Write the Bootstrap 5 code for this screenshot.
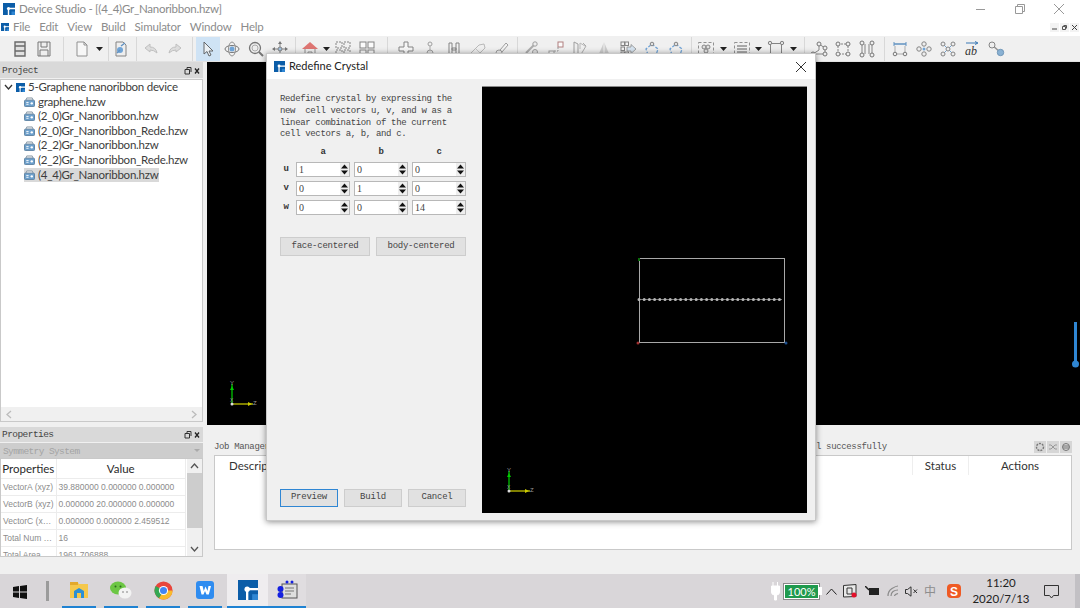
<!DOCTYPE html>
<html lang="en">
<head>
  <meta charset="UTF-8" />
  <title>Device Studio - [(4_4)Gr_Nanoribbon.hzw]</title>
  <link href="https://cdn.jsdelivr.net/npm/bootstrap@5.3.3/dist/css/bootstrap.min.css" rel="stylesheet" />
  <style>
    html, body { width: 1080px; height: 608px; overflow: hidden; }
    body { background: #f0f0f0; font-family: Lato, "Noto Sans", sans-serif; font-size: 12px; color: #333; position: relative; }

    .win-title { height: 18px; background: #fff; padding-left: 3px; color: #8a8a8a; font-size: 11.5px; letter-spacing: -.25px; line-height: 20px; }
    .win-ctrl { gap: 29px; padding-right: 16px; }
    .menu-bar { height: 18px; background: #fff; color: #8c8c8c; font-size: 11.5px; letter-spacing: -.2px; line-height: 18px; padding-left: 1px; }
    .menu-bar span { margin-right: 9px; }
    .mdi-btns { gap: 1px; padding-right: 1px; }
    .mdi-btn { width: 9px; height: 9px; background: #f3f3f3; }

    .tool-bar { height: 26px; padding-left: 8px; background: #f0f0f0; border-bottom: 1px solid #e2e2e2; }
    .ti { width: 24px; height: 18px; flex: none; }
    .ti use { opacity: .78; }
    .ti-sel { background: #cfe3f5; box-shadow: 0 3px 0 #cfe3f5, 0 -3px 0 #cfe3f5; }
    .tc { height: 18px; flex: none; }
    .tsep { flex: none; height: 24px; position: relative; }
    .tsep::after { content: ""; position: absolute; left: 50%; top: 0; bottom: 0; border-left: 1px solid #d8d8d8; }

    .main-area { height: 508px; }
    .side-col { width: 203px; flex: none; }
    .dock-head { height: 16px; background: #d9d9d9; font: 9.5px/14px "Liberation Mono", monospace; letter-spacing: -.55px; color: #444; padding: 2px 3px 0 2px; }
    .dock-props { height: 15px; margin-top: 5px; padding-top: 1px; }
    .tree-box { height: 343px; margin-top: 1px; background: #fff; border: 1px solid #c9c9c9; }
    .tree-rows { font-size: 11.5px; letter-spacing: -.25px; line-height: 14.6px; color: #3c3c3c; }
    .tree-root { padding-left: 3px; gap: 3px; }
    .tree-item { padding-left: 23px; gap: 3px; width: fit-content; }
    .tree-on { background: #d9d9d9; margin-left: 23px; padding-left: 0; padding-right: 1px; }
    .h-scroll { height: 14px; background: #f0f0f0; }

    .sym-combo { height: 15px; margin-top: 1px; background: #cdcdcd; color: #a4a4a4; font: 9.5px/15px "Liberation Mono", monospace; letter-spacing: -.6px; padding: 1px 3px 0; }
    .prop-box { height: 99px; border: 1px solid #c9c9c9; background: #fff; overflow: hidden; }
    .prop-table { width: 185px; table-layout: fixed; border-collapse: collapse; font-family: "Liberation Sans", sans-serif; font-size: 8.5px; color: #8c8c8c; }
    .prop-table th { font: 400 11.5px/19px Lato, sans-serif; color: #2b2b2b; text-align: center; height: 19px; padding: 0; border-right: 1px solid #ececec; }
    .prop-table td { height: 17px; padding: 0 2px; border: 1px solid #ececec; border-left: 0; white-space: nowrap; overflow: hidden; }
    .v-scroll { width: 15px; flex: none; background: #f0f0f0; }
    .v-thumb { height: 55px; background: #cdcdcd; }

    .work-col { min-width: 0; padding-left: 4px; }
    .gl-view { height: 363px; background: #000; padding: 0 0 15px 17px; }
    .gl-view svg { display: block; }
    .job-head { height: 13px; margin: 16px 8px 0 7px; font: 9px/13px "Liberation Mono", monospace; color: #555; letter-spacing: -.35px; }
    .job-left { width: 602px; flex: none; }
    .job-btn { width: 12px; height: 12px; background: #d6d6d6; margin-left: 1px; }
    .job-box { height: 95px; margin: 1px 8px 0 7px; background: #fff; border: 1px solid #c9c9c9; }
    .job-cols { height: 19px; color: #333; font-size: 11.5px; line-height: 19px; }
    .job-desc { padding-left: 14px; }
    .job-status { width: 57px; border: solid #eee; border-width: 0 1px; text-align: center; }
    .job-act { width: 102px; text-align: center; }

    .crystal-dlg { position: absolute; left: 266px; top: 53px; width: 550px; height: 468px; background: #f0f0f0; border: 1px solid #c8c8c8; box-shadow: 0 1px 6px rgba(0,0,0,.45); }
    .dlg-head { height: 25px; background: #fff; padding: 0 9px 0 7px; font-size: 11px; color: #222; }
    .dlg-body { height: 441px; padding: 7px 7px 7px 0; }
    .dlg-form { width: 215px; flex: none; padding: 8px 16px 6px 13px; font: 9px/11.8px "Liberation Mono", monospace; color: #444; letter-spacing: -.35px; }
    .dlg-note { white-space: pre; margin: 0; }
    .abc-grid { display: grid; grid-template-columns: 12px 54px 54px 54px; column-gap: 4px; row-gap: 4px; margin-top: 6px; align-items: center; }
    .abc-grid b { text-align: center; color: #333; line-height: 11px; }
    .spin-wrap { height: 15px; background: #fff; border: 1px solid #b8b8b8; }
    .spin-val { width: 100%; min-width: 0; height: 13px; padding: 0 0 0 2px; border: 0; border-radius: 0; background: #fff; font: 10px/13px "Liberation Serif", serif; color: #444; outline: 0; box-shadow: none; }
    .spin-arrows { width: 9px; flex: none; }
    .spin-arrows svg { display: block; }
    .dlg-btn { height: 18px; padding: 0; background: #e1e1e1; border: 1px solid #cdcdcd; border-radius: 0; font: inherit; color: #444; letter-spacing: -.25px; flex: 1 1 0; }
    .dlg-btn:hover { background: #e1e1e1; border-color: #cdcdcd; color: #444; }
    .dlg-btn-on, .dlg-btn-on:hover { border-color: #2f86d3; }
    .dlg-mid { margin-top: 22px; gap: 6px; }
    .dlg-mid .dlg-btn { height: 19px; }
    .dlg-foot { gap: 6px; }
    .dlg-view { width: 325px; height: 427px; background: #000; border-top: 1px solid #888; flex: none; }
    .dlg-view svg { display: block; }

    .level-knob { position: absolute; left: 1072px; top: 322px; width: 7px; height: 47px; }

    .task-bar { position: absolute; left: 0; right: 0; top: 574px; height: 34px; background: #d9d6d9; border-right: 5px solid #c2c0c4; }
    .start-btn { width: 46px; padding-left: 13px; }
    .task-sep { width: 3px; height: 20px; background: #9b9b9b; margin-right: 13px; }
    .task-app { height: 34px; width: 34px; margin-right: 8px; border-bottom: 2px solid #1f82d2; }
    .task-active { width: 41px; margin-left: -3px; margin-right: 0; background: #efedef; }
    .task-open { width: 38px; margin-right: 0; background: #e0dde0; }
    .tray { padding-right: 16px; color: #222; }
    .tray-cn { font-family: "Noto Sans CJK SC", sans-serif; color: #8d8d8d; margin-right: 11px; }
    .tray-caret { margin-right: 6px; }
    .clock-box { width: 62px; margin-left: 9px; margin-right: 12px; font-size: 11.5px; line-height: 16px; text-align: center; color: #222; }
    .batt-txt { width: 35px; height: 15px; background: #1f9a4d; border: 1px solid #fff; outline: 1px solid #8a8a8a; color: #fff; font-size: 11px; line-height: 13px; text-align: center; }
  </style>
</head>
<body>
  <svg width="0" height="0" class="position-absolute">
    <defs>
      <symbol id="logo" viewBox="0 0 12 12"><rect width="12" height="12" fill="#0b5da8"/><path d="M5.5 12V5.5H12" fill="none" stroke="#fff" stroke-width="1.4"/><circle cx="5.5" cy="5.5" r="1.6" fill="#fff"/><path d="M8.5 8.5H12V12H8.5Z" fill="#2f86d3"/></symbol>
      <symbol id="hzw" viewBox="0 0 12 11"><path d="M2 3.5 3 1H9L10 3.5" fill="#e6e6e6" stroke="#8a9aa8"/><rect x=".5" y="3.5" width="11" height="7" rx="1" fill="#6da0cc" stroke="#5a7f9f"/><path d="M2.5 6H5M2.5 8H5" stroke="#fff"/><circle cx="8.5" cy="7" r="1.3" fill="#fff"/></symbol>
      <symbol id="t-print" viewBox="0 0 18 18"><path d="M4 2H14V16H4Z" fill="#ddd" stroke="#444" stroke-width="1.4"/><path d="M4 6H14M4 11H14" stroke="#444" stroke-width="1.6"/></symbol>
      <symbol id="t-save" viewBox="0 0 18 18"><path d="M3 2H15V16H3Z" fill="#eee" stroke="#555"/><path d="M6 2V7H12V2M5 16V10H13V16" fill="none" stroke="#555"/></symbol>
      <symbol id="t-doc" viewBox="0 0 18 18"><path d="M4 2H11L14 5V16H4Z" fill="#fafafa" stroke="#777"/><path d="M11 2V5H14" fill="none" stroke="#777"/></symbol>
      <symbol id="t-open" viewBox="0 0 18 18"><path d="M4 2H11L14 5V16H4Z" fill="#eee" stroke="#666"/><circle cx="8" cy="10" r="3" fill="#4d8fd0"/><path d="M9 6 13 3M5 13 8 10" stroke="#3a78b5" stroke-width="1.4"/></symbol>
      <symbol id="t-undo" viewBox="0 0 18 18"><path d="M3 8 8 4V7Q14 7 15 13Q12 10 8 10V12Z" fill="#d8d8d8" stroke="#b3b3b3"/></symbol>
      <symbol id="t-redo" viewBox="0 0 18 18"><path d="M15 8 10 4V7Q4 7 3 13Q6 10 10 10V12Z" fill="#d8d8d8" stroke="#b3b3b3"/></symbol>
      <symbol id="t-arrow" viewBox="0 0 18 18"><path d="M5 2V14L8 11.5 10 16 12 15 10 11H14Z" fill="#f4f4f4" stroke="#444"/></symbol>
      <symbol id="t-rot" viewBox="0 0 18 18"><ellipse cx="9" cy="9" rx="7" ry="3.5" fill="none" stroke="#555"/><ellipse cx="9" cy="9" rx="3.5" ry="7" fill="none" stroke="#777"/><circle cx="9" cy="9" r="2.5" fill="#4d8fd0"/></symbol>
      <symbol id="t-zoom" viewBox="0 0 18 18"><circle cx="8" cy="8" r="5.5" fill="#eee" stroke="#555" stroke-width="1.3"/><circle cx="8" cy="8" r="3" fill="none" stroke="#999"/><path d="M12 12 16 16" stroke="#555" stroke-width="2"/></symbol>
      <symbol id="t-move" viewBox="0 0 18 18"><path d="M9 1 11 4H7ZM9 17 7 14H11ZM1 9 4 7V11ZM17 9 14 11V7Z" fill="#555"/><path d="M9 4V14M4 9H14" stroke="#666"/><circle cx="9" cy="9" r="2" fill="#8fb7dc" stroke="#666"/></symbol>
      <symbol id="t-home" viewBox="0 0 18 18"><path d="M1 9 9 2 17 9Z" fill="#d9534f"/><path d="M4 9V16H14V9" fill="#eee" stroke="#777"/><path d="M7 16V12H11V16" fill="none" stroke="#777"/></symbol>
      <symbol id="t-grid" viewBox="0 0 18 18"><g fill="none" stroke="#666" stroke-dasharray="2 1"><rect x="2" y="2" width="6" height="6"/><rect x="10" y="2" width="6" height="6"/><rect x="2" y="10" width="6" height="6"/><rect x="10" y="10" width="6" height="6"/></g></symbol>
      <symbol id="t-grid2" viewBox="0 0 18 18"><g fill="#fff" stroke="#666"><rect x="2" y="2" width="6" height="6"/><rect x="10" y="2" width="6" height="6"/><rect x="2" y="10" width="6" height="6"/><rect x="10" y="10" width="6" height="6"/></g></symbol>
      <symbol id="t-plus" viewBox="0 0 18 18"><path d="M7 2H11V7H16V11H11V16H7V11H2V7H7Z" fill="#fafafa" stroke="#666"/></symbol>
      <symbol id="t-man" viewBox="0 0 18 18"><circle cx="9" cy="4" r="2" fill="none" stroke="#888"/><path d="M9 6V11" stroke="#999"/><path d="M3 16H15" stroke="#bbb"/><circle cx="9" cy="13" r="3" fill="#ddd" stroke="#888"/></symbol>
      <symbol id="t-h" viewBox="0 0 18 18"><path d="M4 3H7V15H4ZM11 3H14V15H11ZM7 8H11V10H7Z" fill="#f4f4f4" stroke="#666"/></symbol>
      <symbol id="t-erase" viewBox="0 0 18 18"><path d="M2 13 10 5 15 4 16 8 8 16H4Z" fill="#f0f0f0" stroke="#aaa"/><path d="M7 9 11 13" stroke="#bbb"/></symbol>
      <symbol id="t-brush" viewBox="0 0 18 18"><path d="M7 10 13 3 15 5 9 12" fill="#f4f4f4" stroke="#888"/><circle cx="6" cy="13" r="3" fill="#eee" stroke="#888"/></symbol>
      <symbol id="t-atoms" viewBox="0 0 18 18"><path d="M3 13 11 5" stroke="#999" stroke-width="2"/><circle cx="12" cy="4" r="2.2" fill="#eee" stroke="#888"/><circle cx="12" cy="12" r="2.5" fill="#ddd" stroke="#888"/><path d="M2 16H15" stroke="#aaa" stroke-width="1.5"/></symbol>
      <symbol id="t-step" viewBox="0 0 18 18"><rect x="11" y="2" width="5" height="5" fill="#fff" stroke="#a06060"/><rect x="2" y="11" width="5" height="5" fill="#fff" stroke="#888"/><path d="M7 11H11V7" fill="none" stroke="#888" stroke-dasharray="2 1"/></symbol>
      <symbol id="t-mirror" viewBox="0 0 18 18"><path d="M3 2 7 4V16H3Z" fill="#eee" stroke="#888"/><path d="M9 16 15 6 12 3" fill="none" stroke="#999"/><path d="M9 9 9 3 14 6" fill="none" stroke="#aaa"/></symbol>
      <symbol id="t-cone" viewBox="0 0 18 18"><path d="M9 2 15 16H3Z" fill="#c4c4c4"/><path d="M9 2V16" stroke="#f4f4f4"/></symbol>
      <symbol id="t-next" viewBox="0 0 18 18"><g fill="#f4f4f4" stroke="#666"><rect x="2" y="2" width="3.5" height="3.5"/><rect x="6" y="2" width="3.5" height="3.5"/><rect x="2" y="7" width="3.5" height="3.5"/><rect x="2" y="12" width="3.5" height="3.5"/><rect x="6" y="12" width="3.5" height="3.5"/></g><path d="M8 7H12V4.5L17 9 12 13.5V11H8Z" fill="#cfe0ef" stroke="#666" stroke-width=".7"/></symbol>
      <symbol id="t-ring" viewBox="0 0 18 18"><path d="M9 4 15 9 13 15H5L3 9Z" fill="none" stroke="#4d8fd0" stroke-width="1.3" stroke-dasharray="3 1.5"/><circle cx="9" cy="4" r="1.8" fill="#ddd" stroke="#666"/></symbol>
      <symbol id="t-sel1" viewBox="0 0 18 18"><rect x="1.5" y="2.5" width="15" height="13" fill="none" stroke="#777" stroke-dasharray="3 2"/><g fill="#ddd" stroke="#666"><circle cx="7" cy="7" r="2"/><circle cx="11" cy="7" r="2"/><circle cx="9" cy="11" r="2"/></g></symbol>
      <symbol id="t-sel2" viewBox="0 0 18 18"><rect x="1.5" y="2.5" width="15" height="13" fill="none" stroke="#777" stroke-dasharray="3 2"/><path d="M4 6H14M4 9H14M4 12H14" stroke="#777" stroke-width="1.6"/></symbol>
      <symbol id="t-frame" viewBox="0 0 18 18"><rect x="3.5" y="3.5" width="11" height="11" fill="#eee" stroke="#666"/><g fill="#ddd" stroke="#666"><circle cx="3" cy="3" r="1.7"/><circle cx="15" cy="3" r="1.7"/><circle cx="3" cy="15" r="1.7"/><circle cx="15" cy="15" r="1.7"/></g></symbol>
      <symbol id="t-hex" viewBox="0 0 18 18"><path d="M3 14 9 10 9 4 15 8V14H3Z" fill="none" stroke="#666"/><g fill="#eee" stroke="#555"><circle cx="9" cy="4" r="2"/><circle cx="15" cy="8" r="2"/><circle cx="3" cy="14" r="2"/><circle cx="15" cy="14" r="2"/></g></symbol>
      <symbol id="t-sq" viewBox="0 0 18 18"><rect x="4" y="4" width="10" height="10" fill="none" stroke="#666" stroke-dasharray="2 1"/><g fill="#eee" stroke="#555"><circle cx="4" cy="4" r="2"/><circle cx="14" cy="4" r="2"/><circle cx="4" cy="14" r="2"/><circle cx="14" cy="14" r="2"/></g></symbol>
      <symbol id="t-bars" viewBox="0 0 18 18"><path d="M4 4V14M14 4V14M7 4V14M11 4V14" stroke="#666"/><g fill="#eee" stroke="#555"><circle cx="4" cy="3" r="2"/><circle cx="14" cy="3" r="2"/><circle cx="4" cy="15" r="2"/><circle cx="14" cy="15" r="2"/></g></symbol>
      <symbol id="t-dist" viewBox="0 0 18 18"><path d="M3 4H15" stroke="#3a78b5" stroke-width="1.5"/><path d="M3 2V6M15 2V6" stroke="#3a78b5"/><path d="M4 6V13M14 6V13M4 14H14" stroke="#999"/><circle cx="4" cy="14" r="1.8" fill="#eee" stroke="#555"/><circle cx="14" cy="14" r="1.8" fill="#eee" stroke="#555"/></symbol>
      <symbol id="t-ang" viewBox="0 0 18 18"><g fill="#eee" stroke="#666"><circle cx="9" cy="4" r="2.2"/><circle cx="4" cy="9" r="2.2"/><circle cx="14" cy="9" r="2.2"/><circle cx="9" cy="14" r="2.2"/></g><circle cx="9" cy="9" r="1.5" fill="#4d8fd0"/></symbol>
      <symbol id="t-cross" viewBox="0 0 18 18"><path d="M4 4 14 14M14 4 4 14" stroke="#4d8fd0"/><g fill="#eee" stroke="#666"><circle cx="4" cy="4" r="2"/><circle cx="14" cy="4" r="2"/><circle cx="4" cy="14" r="2"/><circle cx="14" cy="14" r="2"/><circle cx="9" cy="9" r="2"/></g></symbol>
      <symbol id="t-key" viewBox="0 0 18 18"><path d="M5 5 13 12" stroke="#777" stroke-width="1.5"/><circle cx="5" cy="5" r="3" fill="#eee" stroke="#666"/><circle cx="13.5" cy="12.5" r="3.2" fill="#6da0cc" stroke="#4d7ea8"/></symbol>
      <symbol id="spin" viewBox="0 0 9 13"><rect width="9" height="13" fill="#eee"/><path d="M4.5 1.5 8 5.5H1ZM4.5 11.5 1 7.5H8Z" fill="#111"/></symbol>
      <symbol id="axes" viewBox="0 0 36 30"><path d="M8 24V4" stroke="#0a0" stroke-width="1.5"/><path d="M8 24H29" stroke="#aa0" stroke-width="1.5"/><path d="M8 6 6 10H10Z" fill="#0c0"/><path d="M28 24 24 22V26Z" fill="#cc0"/><circle cx="8" cy="24" r="1.5" fill="#ddd"/><text x="6" y="5" fill="#9a9a9a" font-size="6" font-family="Liberation Sans">Y</text><text x="29" y="25" fill="#9a9a9a" font-size="6" font-family="Liberation Sans">Z</text><text x="6" y="22" fill="#9a9a9a" font-size="5" font-family="Liberation Sans">X</text></symbol>
    </defs>
  </svg>

  <div class="win-title d-flex justify-content-between">
    <div class="d-flex align-items-center gap-1"><svg width="12" height="12"><use href="#logo"/></svg><span>Device Studio - [(4_4)Gr_Nanoribbon.hzw]</span></div>
    <div class="win-ctrl d-flex align-items-center">
      <svg width="10" height="10"><path d="M0 5.5H9" stroke="#999"/></svg>
      <svg width="10" height="10"><path d="M.5 2.5H7.5V9.5H.5ZM2.5 2.5V.5H9.5V7.5H7.5" fill="none" stroke="#999"/></svg>
      <svg width="10" height="10"><path d="M0 0 10 10M10 0 0 10" stroke="#999"/></svg>
    </div>
  </div>
  <div class="menu-bar d-flex justify-content-between">
    <div class="d-flex align-items-center">
      <svg class="me-1" width="8" height="8"><use href="#logo"/></svg>
      <span>File</span><span>Edit</span><span>View</span><span>Build</span><span>Simulator</span><span>Window</span><span>Help</span>
    </div>
    <div class="mdi-btns d-flex align-items-center">
      <div class="mdi-btn d-flex align-items-center justify-content-center"><svg width="5" height="5"><path d="M0 4H5" stroke="#444"/></svg></div>
      <div class="mdi-btn d-flex align-items-center justify-content-center"><svg width="5" height="5"><path d="M.5 1.5H3.5V4.5H.5ZM1.5 .5H4.5V3.5" fill="none" stroke="#555"/></svg></div>
      <div class="mdi-btn d-flex align-items-center justify-content-center"><svg width="5" height="5"><path d="M0 0 5 5M5 0 0 5" stroke="#444"/></svg></div>
    </div>
  </div>

  <div class="tool-bar d-flex align-items-center">
    <svg class="ti"><use href="#t-print"/></svg><svg class="ti"><use href="#t-save"/></svg>
    <span class="tsep" style="width:14px"></span>
    <svg class="ti"><use href="#t-doc"/></svg><svg class="tc" width="12"><path d="M2 7H9L5.5 11Z" fill="#222"/></svg>
    <span class="tsep" style="width:3px"></span>
    <svg class="ti"><use href="#t-open"/></svg>
    <span class="tsep" style="width:6px"></span>
    <svg class="ti"><use href="#t-undo"/></svg><svg class="ti"><use href="#t-redo"/></svg>
    <span class="tsep" style="width:9px"></span>
    <svg class="ti ti-sel"><use href="#t-arrow"/></svg><svg class="ti"><use href="#t-rot"/></svg><svg class="ti"><use href="#t-zoom"/></svg><svg class="ti"><use href="#t-move"/></svg>
    <span class="tsep" style="width:6px"></span>
    <svg class="ti"><use href="#t-home"/></svg><svg class="tc" width="9"><path d="M1 7H8L4.5 11Z" fill="#222"/></svg><svg class="ti"><use href="#t-grid"/></svg><svg class="ti"><use href="#t-grid2"/></svg>
    <span class="tsep" style="width:15px"></span>
    <svg class="ti"><use href="#t-plus"/></svg><svg class="ti"><use href="#t-man"/></svg><svg class="ti"><use href="#t-h"/></svg><svg class="ti"><use href="#t-erase"/></svg><svg class="ti"><use href="#t-brush"/></svg>
    <span class="tsep" style="width:6px"></span>
    <svg class="ti"><use href="#t-atoms"/></svg><svg class="ti"><use href="#t-step"/></svg><svg class="ti"><use href="#t-mirror"/></svg><svg class="ti"><use href="#t-cone"/></svg><svg class="ti"><use href="#t-next"/></svg><svg class="ti"><use href="#t-ring"/></svg><svg class="ti"><use href="#t-ring"/></svg>
    <span class="tsep" style="width:6px"></span>
    <svg class="ti"><use href="#t-sel1"/></svg><svg class="tc" width="12"><path d="M2 7H9L5.5 11Z" fill="#222"/></svg><svg class="ti"><use href="#t-sel2"/></svg><svg class="tc" width="10"><path d="M1 7H8L4.5 11Z" fill="#222"/></svg><svg class="ti"><use href="#t-frame"/></svg><svg class="tc" width="12"><path d="M2 7H9L5.5 11Z" fill="#222"/></svg>
    <span class="tsep" style="width:7px"></span>
    <svg class="ti"><use href="#t-hex"/></svg><svg class="ti"><use href="#t-sq"/></svg><svg class="ti"><use href="#t-bars"/></svg>
    <span class="tsep" style="width:9px"></span>
    <svg class="ti"><use href="#t-dist"/></svg><svg class="ti"><use href="#t-ang"/></svg><svg class="ti"><use href="#t-cross"/></svg>
    <svg class="ti" viewBox="0 0 24 18"><path d="M6 3H17M15 1.5 18 3 15 4.5" fill="none" stroke="#3a78b5"/><text x="5" y="15" font-family="Liberation Serif" font-style="italic" font-size="12" fill="#333">ab</text></svg>
    <svg class="ti"><use href="#t-key"/></svg>
  </div>

  <div class="main-area d-flex">
    <div class="side-col d-flex flex-column">
      <div class="dock-head d-flex justify-content-between align-items-center">
        <span>Project</span>
        <svg width="16" height="8"><path d="M1 2.5H5.5V7H1ZM3 2.5V.5H7V5" fill="none" stroke="#333"/><path d="M11 1.5 15 6.5M15 1.5 11 6.5" stroke="#222" stroke-width="1.3"/></svg>
      </div>
      <div class="tree-box d-flex flex-column">
        <div class="tree-rows flex-grow-1">
          <div class="tree-root d-flex align-items-center"><svg width="9" height="7"><path d="M1 1 4.5 5 8 1" fill="none" stroke="#333" stroke-width="1.3"/></svg><svg width="9" height="9"><use href="#logo"/></svg><span>5-Graphene nanoribbon device</span></div>
          <div class="tree-item d-flex align-items-center"><svg width="11" height="10"><use href="#hzw"/></svg><span>graphene.hzw</span></div>
          <div class="tree-item d-flex align-items-center"><svg width="11" height="10"><use href="#hzw"/></svg><span>(2_0)Gr_Nanoribbon.hzw</span></div>
          <div class="tree-item d-flex align-items-center"><svg width="11" height="10"><use href="#hzw"/></svg><span>(2_0)Gr_Nanoribbon_Rede.hzw</span></div>
          <div class="tree-item d-flex align-items-center"><svg width="11" height="10"><use href="#hzw"/></svg><span>(2_2)Gr_Nanoribbon.hzw</span></div>
          <div class="tree-item d-flex align-items-center"><svg width="11" height="10"><use href="#hzw"/></svg><span>(2_2)Gr_Nanoribbon_Rede.hzw</span></div>
          <div class="tree-item tree-on d-flex align-items-center"><svg width="11" height="10"><use href="#hzw"/></svg><span>(4_4)Gr_Nanoribbon.hzw</span></div>
        </div>
        <div class="h-scroll d-flex justify-content-between align-items-center px-1">
          <svg width="7" height="9"><path d="M6 1 2 4.5 6 8" fill="none" stroke="#bbb" stroke-width="1.3"/></svg>
          <svg width="7" height="9"><path d="M1 1 5 4.5 1 8" fill="none" stroke="#bbb" stroke-width="1.3"/></svg>
        </div>
      </div>
      <div class="dock-head dock-props d-flex justify-content-between align-items-center">
        <span>Properties</span>
        <svg width="16" height="8"><path d="M1 2.5H5.5V7H1ZM3 2.5V.5H7V5" fill="none" stroke="#333"/><path d="M11 1.5 15 6.5M15 1.5 11 6.5" stroke="#222" stroke-width="1.3"/></svg>
      </div>
      <div class="sym-combo d-flex justify-content-between align-items-center">
        <span>Symmetry System</span><svg width="6" height="4"><path d="M0 0H6L3 3Z" fill="#aaa"/></svg>
      </div>
      <div class="prop-box d-flex">
        <div class="flex-grow-1">
          <table class="prop-table">
            <colgroup><col style="width:55px"><col></colgroup>
            <thead><tr><th>Properties</th><th>Value</th></tr></thead>
            <tbody>
              <tr><td>VectorA (xyz)</td><td>39.880000 0.000000 0.000000</td></tr>
              <tr><td>VectorB (xyz)</td><td>0.000000 20.000000 0.000000</td></tr>
              <tr><td>VectorC (x…</td><td>0.000000 0.000000 2.459512</td></tr>
              <tr><td>Total Num …</td><td>16</td></tr>
              <tr><td>Total Area</td><td>1961.706888</td></tr>
            </tbody>
          </table>
        </div>
        <div class="v-scroll d-flex flex-column align-items-center">
          <svg class="my-1" width="9" height="6"><path d="M1 5 4.5 1 8 5" fill="none" stroke="#555" stroke-width="1.3"/></svg>
          <div class="v-thumb w-100"></div>
          <svg class="mt-auto mb-1" width="9" height="6"><path d="M1 1 4.5 5 8 1" fill="none" stroke="#555" stroke-width="1.3"/></svg>
        </div>
      </div>
    </div>

    <div class="work-col flex-grow-1 d-flex flex-column">
      <div class="gl-view d-flex align-items-end">
        <svg width="36" height="30"><use href="#axes"/></svg>
      </div>
      <div class="job-head d-flex">
        <div class="job-left">Job Manager</div>
        <div class="flex-grow-1">l successfully</div>
        <div class="d-flex">
          <div class="job-btn d-flex align-items-center justify-content-center"><svg width="10" height="10"><circle cx="5" cy="5" r="3.5" fill="none" stroke="#777" stroke-width="1.4" stroke-dasharray="2 1"/></svg></div>
          <div class="job-btn d-flex align-items-center justify-content-center"><svg width="10" height="10"><path d="M1 3H3L7 7H9M1 7H3L7 3H9" fill="none" stroke="#999"/></svg></div>
          <div class="job-btn d-flex align-items-center justify-content-center"><svg width="10" height="10"><circle cx="5" cy="5" r="3.5" fill="none" stroke="#777"/><path d="M2 4H8M2 6H8" stroke="#777"/></svg></div>
        </div>
      </div>
      <div class="job-box">
        <div class="job-cols d-flex">
          <div class="job-desc flex-grow-1">Description</div>
          <div class="job-status">Status</div>
          <div class="job-act">Actions</div>
        </div>
      </div>
    </div>
  </div>

  <svg class="level-knob" viewBox="0 0 7 47"><rect x="2" width="3" height="42" fill="#2f86d3"/><circle cx="3.5" cy="42" r="3.5" fill="#2f86d3"/></svg>

  <div class="crystal-dlg">
    <div class="dlg-head d-flex align-items-center justify-content-between">
      <div class="d-flex align-items-center gap-1"><svg width="11" height="11"><use href="#logo"/></svg><span>Redefine Crystal</span></div>
      <svg width="10" height="10"><path d="M0 0 10 10M10 0 0 10" stroke="#333"/></svg>
    </div>
    <div class="dlg-body d-flex">
      <div class="dlg-form d-flex flex-column">
        <p class="dlg-note">Redefine crystal by expressing the
new  cell vectors u, v, and w as a
linear combination of the current
cell vectors a, b, and c.</p>
        <div class="abc-grid">
          <span></span><b>a</b><b>b</b><b>c</b>
          <b>u</b>
          <div class="spin-wrap d-flex"><input class="form-control spin-val" value="1"><div class="spin-arrows"><svg width="9" height="13"><use href="#spin"/></svg></div></div>
          <div class="spin-wrap d-flex"><input class="form-control spin-val" value="0"><div class="spin-arrows"><svg width="9" height="13"><use href="#spin"/></svg></div></div>
          <div class="spin-wrap d-flex"><input class="form-control spin-val" value="0"><div class="spin-arrows"><svg width="9" height="13"><use href="#spin"/></svg></div></div>
          <b>v</b>
          <div class="spin-wrap d-flex"><input class="form-control spin-val" value="0"><div class="spin-arrows"><svg width="9" height="13"><use href="#spin"/></svg></div></div>
          <div class="spin-wrap d-flex"><input class="form-control spin-val" value="1"><div class="spin-arrows"><svg width="9" height="13"><use href="#spin"/></svg></div></div>
          <div class="spin-wrap d-flex"><input class="form-control spin-val" value="0"><div class="spin-arrows"><svg width="9" height="13"><use href="#spin"/></svg></div></div>
          <b>w</b>
          <div class="spin-wrap d-flex"><input class="form-control spin-val" value="0"><div class="spin-arrows"><svg width="9" height="13"><use href="#spin"/></svg></div></div>
          <div class="spin-wrap d-flex"><input class="form-control spin-val" value="0"><div class="spin-arrows"><svg width="9" height="13"><use href="#spin"/></svg></div></div>
          <div class="spin-wrap d-flex"><input class="form-control spin-val" value="14"><div class="spin-arrows"><svg width="9" height="13"><use href="#spin"/></svg></div></div>
        </div>
        <div class="dlg-mid d-flex">
          <button class="btn dlg-btn">face-centered</button>
          <button class="btn dlg-btn">body-centered</button>
        </div>
        <div class="dlg-foot d-flex mt-auto">
          <button class="btn dlg-btn dlg-btn-on">Preview</button>
          <button class="btn dlg-btn">Build</button>
          <button class="btn dlg-btn">Cancel</button>
        </div>
      </div>
      <div class="dlg-view">
        <svg width="325" height="426" viewBox="0 0 325 426">
          <rect x="157.5" y="171.5" width="145" height="84" fill="none" stroke="#a8a8a8"/>
          <path d="M157 212.5H300" stroke="#777"/>
          <path d="M157 212.5H300" stroke="#b5b5b5" stroke-width="3" stroke-linecap="round" stroke-dasharray="0 5.2"/>
          <rect x="156" y="171" width="2" height="3" fill="#0a6a0a"/>
          <circle cx="156" cy="256" r="1.5" fill="#a03030"/>
          <circle cx="304" cy="256" r="1.5" fill="#1c4f8f"/>
          <use href="#axes" x="19" y="380" width="36" height="30"/>
        </svg>
      </div>
    </div>
  </div>

  <div class="task-bar d-flex align-items-center">
    <div class="start-btn"><svg width="14" height="14" viewBox="0 0 14 14"><path d="M0 2 6 1V6.5H0ZM7 .9 14 0V6.5H7ZM0 7.5H6V13L0 12ZM7 7.5H14V14L7 13.1Z" fill="#111"/></svg></div>
    <div class="task-sep"></div>
    <div class="task-app d-flex align-items-center justify-content-center"><svg width="20" height="18" viewBox="0 0 20 18"><path d="M1 1H8L10 3H19V17H1Z" fill="#f5c84c"/><rect x="1" y="1" width="8" height="3" fill="#e3a92c"/><path d="M5 17V10L10 7 15 10V17H12V12H8V17Z" fill="#2c8fd6"/></svg></div>
    <div class="task-app d-flex align-items-center justify-content-center"><svg width="22" height="18" viewBox="0 0 22 18"><ellipse cx="8" cy="7" rx="8" ry="6.5" fill="#6cc644"/><circle cx="5.5" cy="5.5" r="1" fill="#2c6a1e"/><circle cx="10.5" cy="5.5" r="1" fill="#2c6a1e"/><ellipse cx="15" cy="12" rx="6.5" ry="5.5" fill="#f3f3f3"/><circle cx="13" cy="11" r=".8" fill="#777"/><circle cx="17" cy="11" r=".8" fill="#777"/></svg></div>
    <div class="task-app d-flex align-items-center justify-content-center"><svg width="19" height="19" viewBox="0 0 20 20"><circle cx="10" cy="10" r="9.5" fill="#e8453c"/><path d="M10 10 19.5 10A9.5 9.5 0 0 1 5.2 18.2Z" fill="#f9bb2d"/><path d="M10 10 5.2 18.2A9.5 9.5 0 0 1 1.8 5.2Z" fill="#34a853"/><circle cx="10" cy="10" r="4.8" fill="#fff"/><circle cx="10" cy="10" r="3.7" fill="#4285f4"/></svg></div>
    <div class="task-app d-flex align-items-center justify-content-center"><svg width="18" height="18" viewBox="0 0 18 18"><rect width="18" height="18" rx="3" fill="#2f8cf0"/><path d="M3.5 5H6.5L7.8 10 9.5 5.5 11.5 10 12.5 5H15L12.8 13.5H10.5L9 10 7.5 13.5H5.5Z" fill="#fff"/></svg></div>
    <div class="task-app task-active d-flex align-items-center justify-content-center"><svg width="20" height="20"><use href="#logo"/></svg></div>
    <div class="task-app task-open d-flex align-items-center justify-content-center"><svg width="21" height="20" viewBox="0 0 21 20"><rect x="5" y="4" width="15" height="14" fill="#dedede" stroke="#555"/><path d="M8 8H17M8 11H17M8 14H14" stroke="#777"/><g fill="#1420e0"><circle cx="3.5" cy="9" r="3"/><circle cx="3.5" cy="15" r="3"/><circle cx="10" cy="2" r="1.5"/><circle cx="15" cy="2" r="1.5"/></g></svg></div>

    <div class="tray ms-auto d-flex align-items-center">
      <svg class="me-1" width="9" height="20" viewBox="0 0 9 20"><path d="M2 1V5M6.5 1V5M.5 5H8.5V11Q8.5 14 5.5 14V19H3.5V14Q.5 14 .5 11Z" fill="#fff" stroke="#fff"/></svg>
      <div class="batt-txt">100%</div>
      <svg class="me-1" width="3" height="8"><rect width="3" height="8" fill="#fff"/></svg>
      <svg class="tray-caret" width="11" height="7"><path d="M.5 6.5 5.5 1 10.5 6.5" fill="none" stroke="#222"/></svg>
      <svg class="me-2" width="14" height="14" viewBox="0 0 14 14"><path d="M.5 1.5 13 .5V12.5L.5 13Z" fill="#e8e8e8" stroke="#333"/><path d="M4 4H9V10H4Z" fill="none" stroke="#333"/><circle cx="11" cy="11" r="2.5" fill="#e3102a"/></svg>
      <svg class="me-2" width="14" height="10" viewBox="0 0 14 10"><rect x="4" y="2" width="10" height="7" fill="#222"/><path d="M0 0 4 4" stroke="#222" stroke-width="1.5"/></svg>
      <svg class="tray-caret" width="12" height="12" viewBox="0 0 12 12"><path d="M1 11Q1 6 5 3.5T11 1M4 11Q4 8 6 6.5T11 5M7.5 11Q7.5 9.5 11 8.5" fill="none" stroke="#8a8a8a" stroke-width="1.2"/></svg>
      <svg class="tray-caret" width="13" height="11" viewBox="0 0 13 11"><path d="M.5 3.5H2.5L6 .8V10.2L2.5 7.5H.5Z" fill="none" stroke="#333"/><path d="M8.5 3.5 12 7M12 3.5 8.5 7" stroke="#333"/></svg>
      <span class="tray-cn">中</span>
      <svg width="14" height="14" viewBox="0 0 14 14"><rect width="14" height="14" rx="4" fill="#ef5a24"/><text x="3" y="12" font-size="12" font-weight="700" fill="#fff" font-family="Liberation Sans">S</text></svg>
      <div class="clock-box"><div>11:20</div><div>2020/7/13</div></div>
      <svg width="15" height="15" viewBox="0 0 15 15"><path d="M.5 1.5H14.5V11.5H9.5L7.5 14 5.5 11.5H.5Z" fill="none" stroke="#333"/></svg>
    </div>
  </div>
</body>
</html>
